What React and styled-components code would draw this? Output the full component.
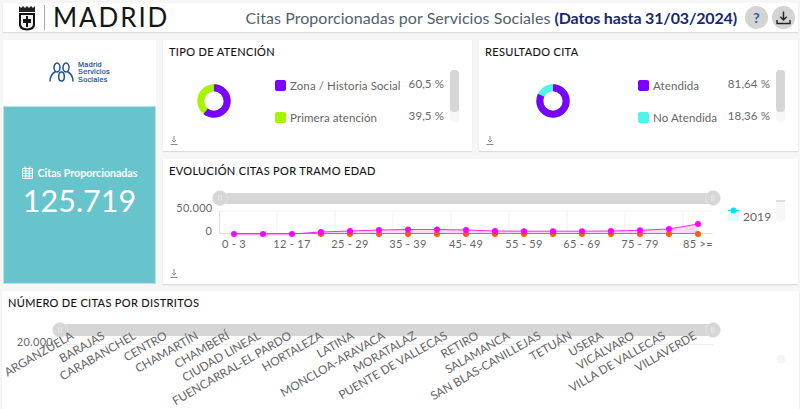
import React from 'react';
import styled, {createGlobalStyle} from 'styled-components';

const GlobalStyle = createGlobalStyle`
    html, body {
        margin: 0;
        height: 409px;
        overflow: hidden;
        background: #f6f6f6;
        font-family: "Lato", "Open Sans", sans-serif;
    }
    * { box-sizing: border-box; }
`;

const purple = '#7a00ff';
const lime = '#a6f500';
const aqua = '#4ff5e8';
const grey = '#d6d6d6';
const labelColor = '#666';

const Page = styled.div`
    width: 800px;
    height: 409px;
    overflow: hidden;
    padding: 3px 2px 0 3px;
    display: flex;
    flex-direction: column;
`;

const Header = styled.header`
    height: 29px;
    flex: none;
    display: flex;
    align-items: center;
    background: #fff;
    box-shadow: 0 1px 1px #ddd;
    padding: 0 3px 0 15px;
`;

const Divider = styled.div`
    width: 1px;
    height: 25px;
    background: #aaa;
    margin: 0 8px 0 8px;
`;

const Wordmark = styled.div`
    font-size: 26px;
    line-height: 29px;
    letter-spacing: 1.9px;
    color: #161616;
`;

const PageTitle = styled.h1`
    margin: 0 4px 0 auto;
    font-size: 16px;
    font-weight: 400;
    letter-spacing: 0.05px;
    color: #55606a;
    white-space: nowrap;

    b {
        font-weight: 700;
        letter-spacing: -0.15px;
        color: #17296e;
    }
`;

const RoundButton = styled.div`
    width: 23px;
    height: 23px;
    border-radius: 50%;
    background: #d4d4d4;
    margin-left: 4px;
    display: flex;
    align-items: center;
    justify-content: center;
    font-size: 14px;
    font-weight: 700;
    color: #1f5f9e;
`;

const Main = styled.div`
    display: flex;
    gap: 7px;
    margin-top: 8px;
    flex: none;
`;

const LeftColumn = styled.div`
    width: 153px;
    flex: none;
    height: 244px;
    display: flex;
    flex-direction: column;
`;

const LogoCard = styled.div`
    height: 66px;
    flex: none;
    background: #fff;
    display: flex;
    align-items: center;
    justify-content: center;
    gap: 4px;
    padding-bottom: 2px;
`;

const LogoText = styled.div`
    font-family: "Liberation Sans", sans-serif;
    font-size: 7.2px;
    letter-spacing: 0.3px;
    line-height: 7.4px;
    color: #1c4f9c;
    -webkit-text-stroke: 0.2px #1c4f9c;
`;

const KpiCard = styled.div`
    flex: 1;
    background: #67c4cd;
    border: 1px solid #b9e2e6;
    color: #fff;
    display: flex;
    flex-direction: column;
    align-items: center;
    justify-content: center;
    padding-bottom: 5px;
`;

const KpiLabel = styled.div`
    display: flex;
    align-items: center;
    gap: 5px;
    font-size: 10.6px;
    font-weight: 700;
    line-height: 14px;
`;

const KpiValue = styled.div`
    font-size: 30.5px;
    line-height: 40px;
`;

const RightColumn = styled.div`
    flex: 1;
    display: flex;
    flex-direction: column;
    gap: 8px;
`;

const TopRow = styled.div`
    display: flex;
    gap: 7px;
    height: 111px;
`;

const Panel = styled.section`
    background: #fff;
    box-shadow: 0 1px 1px #ddd;
    display: flex;
    flex-direction: column;
    flex: ${props => props.$grow || 1};
    height: ${props => props.$height || 'auto'};
    min-width: 0;
`;

const PanelTitle = styled.h3`
    margin: 0;
    height: 24px;
    flex: none;
    padding: 5px 6px 0;
    font-size: 11px;
    line-height: 14px;
    font-weight: 400;
    letter-spacing: 0.34px;
    color: #111;
    -webkit-text-stroke: 0.1px #111;
    white-space: nowrap;
`;

const DonutBody = styled.div`
    display: flex;
    align-items: flex-start;
    padding: 6px 0 0 ${props => props.$left}px;
`;

const DonutWrap = styled.div`
    width: 34px;
    height: 34px;
    margin: 14px ${props => props.$gap}px 0 0;
    flex: none;
`;

const Legend = styled.div`
    width: ${props => props.$width}px;
    flex: none;
    padding-top: 10px;
    display: flex;
    flex-direction: column;
    gap: 21px;
`;

const LegendRow = styled.div`
    display: flex;
    align-items: center;
    height: 11px;
    color: ${labelColor};
    font-size: 11.5px;
    letter-spacing: 0.1px;
    white-space: nowrap;
`;

const Swatch = styled.span`
    width: 11px;
    height: 11px;
    border-radius: 2px;
    margin-right: 4px;
    flex: none;
    background: ${props => props.$color};
`;

const LegendValue = styled.span`
    margin-left: auto;
    position: relative;
    top: -2px;
`;

const ScrollTrack = styled.div`
    width: 9px;
    height: 52px;
    margin-left: 6px;
    flex: none;
    border-radius: 4px;
    background: #f7f7f7;
`;

const ScrollThumb = styled.div`
    height: 42px;
    border-radius: 4px;
    background: ${grey};
`;

const PanelFooter = styled.div`
    margin-top: auto;
    padding: 0 0 6px 7px;
    line-height: 0;
`;

const ChartSvg = styled.svg`
    display: block;
    flex: none;
    font-family: "Lato", sans-serif;
`;

const BottomPanel = styled(Panel)`
    margin: 7px -1px 0;
    height: 130px;
    flex: none;
`;

const SmallDownload = () => (
    <svg width="8" height="9" viewBox="0 0 8 9" fill="none" stroke="#8a8a8a" strokeWidth="1">
        <path d="M4 0v6M2 4l2 2.2L6 4M0.5 8.5h7"/>
    </svg>
);

const Crest = () => (
    <svg width="18" height="26" viewBox="0 0 18 26">
        <path d="M1 1l2 2 2-2 2 2 2-2 2 2 2-2 2 2 2-2v6H1z" fill="#222"/>
        <path d="M1 8h16v12q0 5-8 5.5Q1 25 1 20z" fill="#111"/>
        <path d="M3 10h12v9q0 4-6 4.5Q3 23 3 19z" fill="#eee"/>
        <path d="M8 11h2v11H8zM5 14h8v4H5z" fill="#111"/>
    </svg>
);

const PeopleLogo = () => (
    <svg width="25" height="20" viewBox="0 0 25 20" fill="none" stroke="#1c4f9c" strokeWidth="1.5">
        <ellipse cx="8" cy="5.500" rx="3" ry="4.500"/>
        <ellipse cx="17" cy="5.500" rx="3" ry="4.500"/>
        <ellipse cx="12.500" cy="14.500" rx="2.800" ry="4.500"/>
        <path d="M1 19.500c0-5 2-8 5.500-10M24 19.500c0-5-2-8-5.500-10"/>
    </svg>
);

const Donut = ({first, color, second}) => {
    const r = 13.2;
    const c = 2 * Math.PI * r;
    return (
        <svg width="34" height="34" viewBox="0 0 34 34">
            <circle cx="17" cy="17" r={r} fill="none" stroke={second} strokeWidth="7"/>
            <circle cx="17" cy="17" r={r} fill="none" stroke={color} strokeWidth="7"
                strokeDasharray={`${c * first} ${c}`} transform="rotate(-90 17 17)"/>
        </svg>
    );
};

const Handle = ({x, y}) => (
    <g>
        <circle cx={x} cy={y} r="7.500" fill={grey} stroke="#eaeaea" strokeWidth="0.6"/>
        <path d={`M${x - 1.2} ${y - 3}v6M${x + 1.2} ${y - 3}v6`} stroke="#eee" strokeWidth="0.8"/>
    </g>
);

const ageLabels = [[234, '0 - 3'], [292, '12 - 17'], [350, '25 - 29'], [408, '35 - 39'], [466, '45- 49'], [524, '55 - 59'], [582, '65 - 69'], [640, '75 - 79'], [698, '85 >=']];
const pinkY = [234, 234, 234, 232, 231, 230, 229.500, 229.500, 230, 231, 231.200, 231.200, 231.200, 231, 230.300, 229, 224];
const pointX = i => 234 + i * 29;

const EvolutionChart = () => {
    const line = pinkY.map((y, i) => `${pointX(i)},${y}`).join(' ');
    return (
        <ChartSvg width="635" height="84" viewBox="163 183 635 84">
            <rect x="220" y="193" width="493" height="11" fill={grey}/>
            <path d="M219.500 211H712.500" stroke="#f0f0f0"/>
            {[277, 335, 393, 451, 509, 567, 625, 683].map(x => <path key={x} d={`M${x} 211V233`} stroke="#f2f2f2"/>)}
            <path d="M219.500 211V233.500H712.500" fill="none" stroke="#ddd"/>
            <polygon points={`234,233 ${line} 698,233`} fill="#ffd6f4"/>
            <path d="M234 233.500H698" stroke="#ff6a1a"/>
            {pinkY.slice(3).map((y, i) => <circle key={i} cx={pointX(i + 3)} cy="234" r="3" fill="#fb5a0a"/>)}
            <polyline points={line} fill="none" stroke="#ff2ae0" strokeWidth="1"/>
            {pinkY.map((y, i) => <circle key={i} cx={pointX(i)} cy={y} r="3" fill="#f0f"/>)}
            <Handle x={220} y={198}/>
            <Handle x={713} y={198}/>
            <text x="212.500" y="212" textAnchor="end" fontSize="11" letterSpacing="0.3" fill={labelColor}>50.000</text>
            <text x="212" y="235" textAnchor="end" fontSize="11" fill={labelColor}>0</text>
            {ageLabels.map(([x, t]) => <text key={t} x={x} y="248" textAnchor="middle" fontSize="11" letterSpacing="0.3" fill={labelColor}>{t}</text>)}
            <rect x="728" y="210" width="11" height="11" fill="#dffbfd"/>
            <path d="M728 210.500H739" stroke="#19dcec"/>
            <circle cx="733.500" cy="210.500" r="3" fill="#00e5f5"/>
            <text x="743" y="221" fontSize="12" letterSpacing="0.1" fill={labelColor}>2019</text>
            <rect x="776" y="200" width="9" height="22" rx="4" fill="#f7f7f7"/>
            <rect x="776" y="200" width="9" height="2" fill="#ddd"/>
        </ChartSvg>
    );
};

const districts = ['ARGANZUELA', 'BARAJAS', 'CARABANCHEL', 'CENTRO', 'CHAMARTÍN', 'CHAMBERÍ', 'CIUDAD LINEAL', 'FUENCARRAL-EL PARDO', 'HORTALEZA', 'LATINA', 'MONCLOA-ARAVACA', 'MORATALAZ', 'PUENTE DE VALLECAS', 'RETIRO', 'SALAMANCA', 'SAN BLAS-CANILLEJAS', 'TETUÁN', 'USERA', 'VICÁLVARO', 'VILLA DE VALLECAS', 'VILLAVERDE'];

const DistrictChart = () => (
    <ChartSvg width="797" height="106" viewBox="2 315 797 106">
        <rect x="60" y="324" width="653" height="12" fill={grey}/>
        <path d="M60 344.500H713" stroke="#eee"/>
        <Handle x={60} y={330}/>
        <Handle x={713} y={330}/>
        <text x="53" y="346" textAnchor="end" fontSize="11" letterSpacing="0.3" fill={labelColor}>20.000</text>
        {districts.map((d, i) => {
            const x = 74.500 + i * 31.15;
            return <text key={d} x={x} y="338" textAnchor="end" fontSize="11.8" fill="#666"
                transform={`rotate(-30 ${x} 338)`}>{d}</text>;
        })}
        <circle cx="781" cy="359" r="4.500" fill="#f5f5f5"/>
    </ChartSvg>
);

const App = () => {
    return (
        <Page>
            <GlobalStyle/>
            <Header>
                <Crest/>
                <Divider/>
                <Wordmark>MADRID</Wordmark>
                <PageTitle>Citas Proporcionadas por Servicios Sociales <b>(Datos hasta 31/03/2024)</b></PageTitle>
                <RoundButton>?</RoundButton>
                <RoundButton>
                    <svg width="15" height="14" viewBox="0 0 15 14" fill="none" stroke="#222" strokeWidth="1.400">
                        <path d="M7.500 0.500v8M4.300 5.800l3.200 3.200 3.200-3.200M1 9v3.500h13V9"/>
                    </svg>
                </RoundButton>
            </Header>
            <Main>
                <LeftColumn>
                    <LogoCard>
                        <PeopleLogo/>
                        <LogoText>Madrid<br/>Servicios<br/>Sociales</LogoText>
                    </LogoCard>
                    <KpiCard>
                        <KpiLabel>
                            <svg width="11" height="13" viewBox="0 0 11 13" fill="none" stroke="#fff" strokeWidth="1">
                                <path d="M0.500 2.500h10v10h-10zM0.500 5h10M0.500 7.500h10M0.500 10h10M3.800 2.500v10M7.200 2.500v10M3 0.500v2M8 0.500v2"/>
                            </svg>
                            Citas Proporcionadas
                        </KpiLabel>
                        <KpiValue>125.719</KpiValue>
                    </KpiCard>
                </LeftColumn>
                <RightColumn>
                    <TopRow>
                        <Panel $grow={309}>
                            <PanelTitle>TIPO DE ATENCIÓN</PanelTitle>
                            <DonutBody $left={34}>
                                <DonutWrap $gap={44}><Donut first={0.605} color={purple} second={lime}/></DonutWrap>
                                <Legend $width={169}>
                                    <LegendRow><Swatch $color={purple}/>Zona / Historia Social<LegendValue>60,5 %</LegendValue></LegendRow>
                                    <LegendRow><Swatch $color={lime}/>Primera atención<LegendValue>39,5 %</LegendValue></LegendRow>
                                </Legend>
                                <ScrollTrack><ScrollThumb/></ScrollTrack>
                            </DonutBody>
                            <PanelFooter><SmallDownload/></PanelFooter>
                        </Panel>
                        <Panel $grow={319}>
                            <PanelTitle>RESULTADO CITA</PanelTitle>
                            <DonutBody $left={57}>
                                <DonutWrap $gap={68}><Donut first={0.8164} color={purple} second={aqua}/></DonutWrap>
                                <Legend $width={132}>
                                    <LegendRow><Swatch $color={purple}/>Atendida<LegendValue>81,64 %</LegendValue></LegendRow>
                                    <LegendRow><Swatch $color={aqua}/>No Atendida<LegendValue>18,36 %</LegendValue></LegendRow>
                                </Legend>
                                <ScrollTrack><ScrollThumb/></ScrollTrack>
                            </DonutBody>
                            <PanelFooter><SmallDownload/></PanelFooter>
                        </Panel>
                    </TopRow>
                    <Panel $height="125px">
                        <PanelTitle>EVOLUCIÓN CITAS POR TRAMO EDAD</PanelTitle>
                        <EvolutionChart/>
                        <PanelFooter><SmallDownload/></PanelFooter>
                    </Panel>
                </RightColumn>
            </Main>
            <BottomPanel>
                <PanelTitle>NÚMERO DE CITAS POR DISTRITOS</PanelTitle>
                <DistrictChart/>
            </BottomPanel>
        </Page>
    );
};

export default App;
